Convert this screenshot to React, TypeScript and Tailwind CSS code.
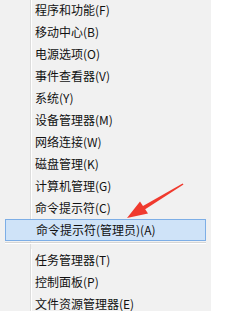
import React from 'react';

const topItems = [
  '程序和功能(F)',
  '移动中心(B)',
  '电源选项(O)',
  '事件查看器(V)',
  '系统(Y)',
  '设备管理器(M)',
  '网络连接(W)',
  '磁盘管理(K)',
  '计算机管理(G)',
  '命令提示符(C)',
];

const bottomItems = ['任务管理器(T)', '控制面板(P)', '文件资源管理器(E)'];

const MenuRow: React.FC<{ label: string; active?: boolean }> = ({ label, active }) => {
  if (active) {
    return (
      <div className="mx-[5px] flex h-[22px] items-center border border-[#7daee6] bg-[#cfe3f8] pl-[30px]">
        <span className="text-[12px] leading-none text-[#111]">{label}</span>
      </div>
    );
  }
  return (
    <div className="mx-[5px] flex h-[22px] items-stretch">
      <div className="w-[26px] shrink-0 border-r border-r-[#dcdcdc]" />
      <div className="flex items-center border-l border-l-white pl-[3px]">
        <span className="text-[12px] leading-none text-[#111]">{label}</span>
      </div>
    </div>
  );
};

export default function App() {
  return (
    <div
      className="relative flex h-[311px] w-[228px] overflow-hidden bg-white"
      style={{ fontFamily: '"Noto Sans CJK SC", "Microsoft YaHei", sans-serif' }}
    >
      <div className="w-[211px] bg-[#f1f1f1]">
        <div className="-mt-px">
          {topItems.map((t) => (
            <MenuRow key={t} label={t} />
          ))}
          <MenuRow label="命令提示符(管理员)(A)" active />
          <div className="mx-[5px] flex h-[8px] flex-col">
            <div className="flex h-[1px]">
              <div className="w-[26px] border-r border-r-[#dcdcdc]" />
            </div>
            <div className="h-[1px] bg-[#d6d6d6]" />
            <div className="h-[1px] bg-white" />
            <div className="flex flex-1">
              <div className="w-[26px] border-r border-r-[#dcdcdc]" />
            </div>
          </div>
          {bottomItems.map((t) => (
            <MenuRow key={t} label={t} />
          ))}
        </div>
      </div>

      {/* red annotation arrow */}
      <svg className="pointer-events-none absolute left-0 top-0" width="228" height="311" viewBox="0 0 228 311">
        <polygon
          points="127,218 148,213.5 145.2,209.3 183.5,184.6 182.6,183.4 143,205.9 140,201.5"
          fill="#f03a2e"
        />
      </svg>
    </div>
  );
}
